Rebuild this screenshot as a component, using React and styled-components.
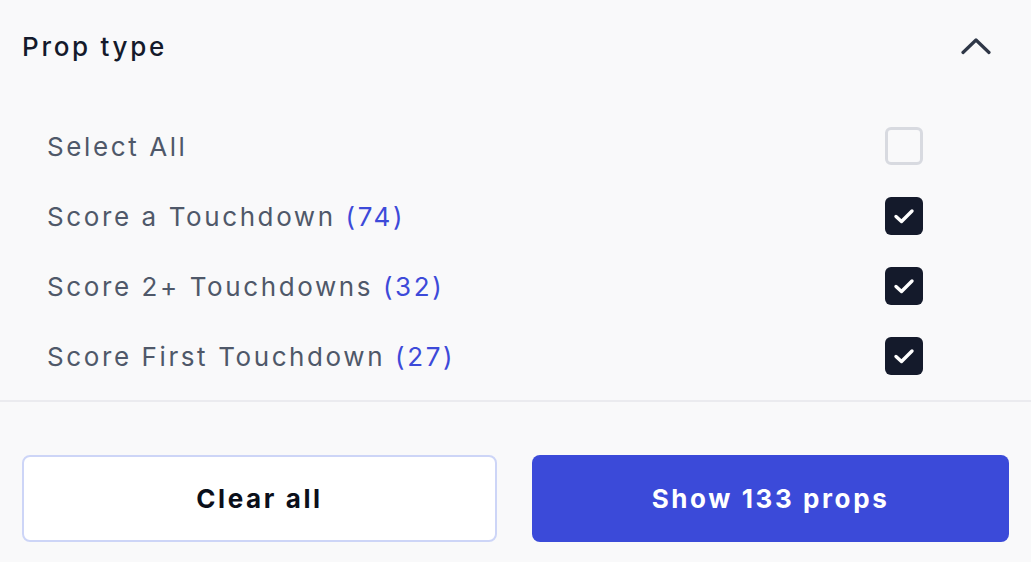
import React from 'react';
import styled, { createGlobalStyle } from 'styled-components';

const GlobalStyle = createGlobalStyle`
  html, body {
    margin: 0;
    padding: 0;
    background: #f9f9fa;
  }
  body {
    font-family: Inter, 'Open Sans', sans-serif;
  }
`;

const options = [
  { label: 'Score a Touchdown', count: 74, checked: true },
  { label: 'Score 2+ Touchdowns', count: 32, checked: true },
  { label: 'Score First Touchdown', count: 27, checked: true },
];

const Panel = styled.div`
  width: 1031px;
  height: 562px;
  background: #f9f9fa;
  display: flex;
  flex-direction: column;
  box-sizing: border-box;
`;

const Header = styled.div`
  height: 92px;
  display: flex;
  align-items: center;
  justify-content: space-between;
  padding: 0 40px 0 22px;
  box-sizing: border-box;
`;

const Title = styled.h2`
  margin: 0;
  font-size: 26px;
  font-weight: 500;
  color: #141a2b;
  letter-spacing: 2.7px;
`;

const Chevron = styled.svg`
  width: 30px;
  height: 18px;
  display: block;
`;

const List = styled.div`
  padding: 19px 108px 9px 47px;
  display: flex;
  flex-direction: column;
  border-bottom: 2px solid #ebebef;
`;

const Row = styled.label`
  height: 70px;
  display: flex;
  align-items: center;
  justify-content: space-between;
`;

const Label = styled.span`
  font-size: 26px;
  color: #4f5869;
  letter-spacing: 2.6px;
`;

const Count = styled.span`
  color: #3d4ad9;
`;

const Box = styled.span`
  width: 38px;
  height: 38px;
  box-sizing: border-box;
  border-radius: 6px;
  display: flex;
  align-items: center;
  justify-content: center;
  background: ${({ $checked }) => ($checked ? '#141a2b' : 'transparent')};
  border: ${({ $checked }) => ($checked ? 'none' : '3px solid #d8dae0')};
`;

const Footer = styled.div`
  display: grid;
  grid-template-columns: 475px 1fr;
  gap: 35px;
  padding: 53px 22px 0 22px;
`;

const Button = styled.button`
  height: 87px;
  border-radius: 8px;
  font-family: Inter, 'Open Sans', sans-serif;
  font-size: 26px;
  font-weight: 700;
  letter-spacing: 2.6px;
  cursor: pointer;
  box-sizing: border-box;
  background: ${({ $primary }) => ($primary ? '#3b4ad9' : '#ffffff')};
  color: ${({ $primary }) => ($primary ? '#ffffff' : '#0b0f1a')};
  border: ${({ $primary }) => ($primary ? 'none' : '2px solid #cdd5f7')};
`;

const Check = () => (
  <svg width="22" height="18" viewBox="0 0 22 18">
    <polyline points="3,9.5 8.5,14.5 19,4" fill="none" stroke="#fff" strokeWidth="3.4" strokeLinecap="round" strokeLinejoin="round" />
  </svg>
);

export default function App() {
  return (
    <>
      <GlobalStyle />
      <Panel>
        <Header>
          <Title>Prop type</Title>
          <Chevron viewBox="0 0 30 18">
            <polyline points="2,15.5 15,3 28,15.5" fill="none" stroke="#2f3747" strokeWidth="3.2" strokeLinecap="round" strokeLinejoin="round" />
          </Chevron>
        </Header>
        <List>
          <Row>
            <Label>Select All</Label>
            <Box />
          </Row>
          {options.map((o) => (
            <Row key={o.label}>
              <Label>
                {o.label} <Count>({o.count})</Count>
              </Label>
              <Box $checked={o.checked}>{o.checked && <Check />}</Box>
            </Row>
          ))}
        </List>
        <Footer>
          <Button>Clear all</Button>
          <Button $primary>Show 133 props</Button>
        </Footer>
      </Panel>
    </>
  );
}
